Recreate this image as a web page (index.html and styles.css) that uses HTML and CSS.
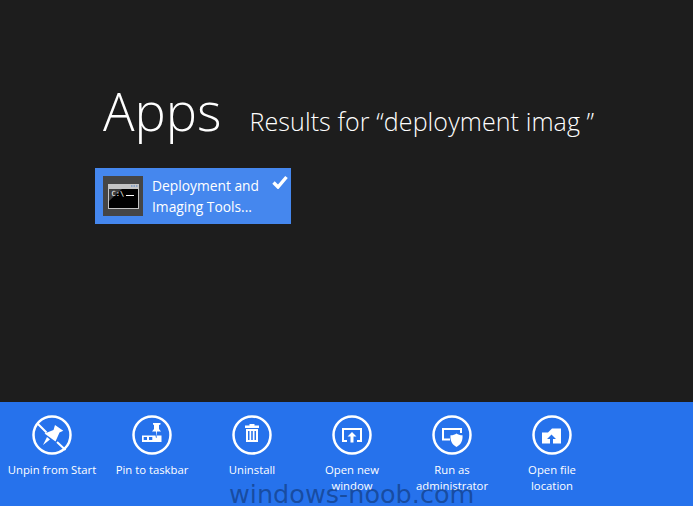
FILE: index.html
```html
<!DOCTYPE html>
<html lang="en">
<head>
  <meta charset="UTF-8" />
  <title>Apps</title>
  <link rel="stylesheet" href="styles.css">
</head>
<body>
  <main class="results">
    <div class="heading">
      <h1>Apps</h1>
      <h2>Results for “deployment imag ”</h2>
    </div>
    <div class="tile">
      <div class="tile-icon">
        <svg width="31" height="25" viewBox="0 0 31 25">
          <rect width="31" height="25" fill="#c4c4c4"/>
          <rect x="1" y="5" width="29" height="19" fill="#000"/>
          <path d="M1 17L14 5H1Z" fill="#3c3c3c"/>
          <path d="M23 1.500h1.500v1H23zM25.500 1.500h1.500v1h-1.500zM28 1.500h1.500v1H28z" fill="#4f7fc4"/>
          <text x="3.500" y="11.500" class="prompt">C:\</text>
          <rect x="18" y="11" width="8" height="1" fill="#fff"/>
        </svg>
      </div>
      <div class="tile-name">Deployment and Imaging Tools...</div>
      <svg class="tile-check" width="16" height="14" viewBox="0 0 16 14">
        <path d="M1.500 7.500L6 12L14.500 2" fill="none" stroke="#fff" stroke-width="3.400"/>
      </svg>
    </div>
  </main>

  <footer class="appbar">
    <div class="command">
      <svg class="ring" width="40" height="40" viewBox="0 0 40 40">
        <circle cx="20" cy="20" r="18.500"/>
        <path class="line" d="M5.500 8.500L14.500 17.500M25 27L33.500 35"/>
        <path class="solid" d="M23 10L31.300 15.700L27.500 17.500L23.500 26.500L12.500 18.500L21.500 15ZM15 22L18 24.500L11 30Z"/>
      </svg>
      <span>Unpin from Start</span>
    </div>
    <div class="command">
      <svg class="ring" width="40" height="40" viewBox="0 0 40 40">
        <circle cx="20" cy="20" r="18.500"/>
        <path class="solid" fill-rule="evenodd" d="M21 8h7.500v1.500l-1.500.5v4l2 2.500h-4l-.5 6-.5-6h-4l2-2.500v-4l-1-.5ZM10 20.500h13.500l.5 2.500h.5l.5-2.500h4.500v6.500H10ZM11.700 22v3h3.300v-3ZM17 22v3h3.300v-3Z"/>
      </svg>
      <span>Pin to taskbar</span>
    </div>
    <div class="command">
      <svg class="ring" width="40" height="40" viewBox="0 0 40 40">
        <circle cx="20" cy="20" r="18.500"/>
        <path class="solid" d="M17.500 9h5v1.500H27V13H13v-2.500h4.500ZM14 14h12v13H14ZM16 16v9h1.500v-9ZM19.200 16v9h1.600v-9ZM22.500 16v9H24v-9Z" fill-rule="evenodd"/>
      </svg>
      <span>Uninstall</span>
    </div>
    <div class="command">
      <svg class="ring" width="40" height="40" viewBox="0 0 40 40">
        <circle cx="20" cy="20" r="18.500"/>
        <path class="line" d="M15 26H11V14H29V26H25"/>
        <path class="solid" d="M20 17L24.500 21.500H21.500V27.500H18.500V21.500H15.500Z"/>
      </svg>
      <span>Open new<br>window</span>
    </div>
    <div class="command">
      <svg class="ring" width="40" height="40" viewBox="0 0 40 40">
        <circle cx="20" cy="20" r="18.500"/>
        <path class="line" d="M18 24.500H11V14H29V18"/>
        <path class="solid" d="M24.500 18.500C26 19.700 28 20.300 30.500 20.300C31 26 28.500 30 24.500 32C20.500 30 18 26 18.500 20.300C21 20.300 23 19.700 24.500 18.500Z"/>
      </svg>
      <span>Run as<br>administrator</span>
    </div>
    <div class="command">
      <svg class="ring" width="40" height="40" viewBox="0 0 40 40">
        <circle cx="20" cy="20" r="18.500"/>
        <path class="solid" fill-rule="evenodd" d="M10 17.500H16L20 13.500H29V28.500H10ZM19.500 19.500L15 24H18V28.500H21V24H24Z"/>
      </svg>
      <span>Open file<br>location</span>
    </div>
  </footer>

  <div class="watermark">windows-noob.com</div>
</body>
</html>
```

FILE: styles.css
```css
html, body {
  height: 100%;
}
body {
  margin: 0;
  position: relative;
  overflow: hidden;
  display: flex;
  flex-direction: column;
  background-color: #1d1d1d;
  color: #fff;
  font-family: "Open Sans", sans-serif;
}
.results {
  flex: 1;
  padding: 76px 0 0 95px;
}
.heading {
  display: flex;
  align-items: baseline;
  padding-left: 8px;
}
h1 {
  margin: 0;
  font-size: 52.500px;
  line-height: 70px;
  font-weight: 300;
}
h2 {
  margin: 0 0 0 28px;
  font-size: 25px;
  font-weight: 300;
  letter-spacing: 0.1px;
}
.tile {
  margin-top: 22px;
  position: relative;
  width: 196px;
  height: 56px;
  background-color: #4587ee;
  display: flex;
  align-items: center;
  box-sizing: border-box;
  padding-left: 8px;
}
.tile-icon {
  width: 40px;
  height: 40px;
  background-color: #454545;
  display: flex;
  align-items: center;
  justify-content: center;
  flex-shrink: 0;
}
.tile-name {
  margin-left: 9px;
  width: 125px;
  font-size: 13.800px;
  line-height: 21px;
}
.tile-check {
  position: absolute;
  top: 7px;
  right: 3px;
}
.prompt {
  font-family: "DejaVu Sans Mono", monospace;
  font-size: 7px;
  fill: #fff;
}
.appbar {
  height: 104px;
  background-color: #2672ec;
  display: flex;
  padding: 13px 0 0 2px;
  box-sizing: border-box;
}
.command {
  width: 100px;
  display: flex;
  flex-direction: column;
  align-items: center;
  font-size: 11.300px;
  line-height: 16px;
  text-align: center;
}
.command span {
  margin-top: 7px;
}
.ring circle {
  fill: none;
  stroke: #fff;
  stroke-width: 2.500;
}
.line {
  fill: none;
  stroke: #fff;
  stroke-width: 2;
}
.solid {
  fill: #fff;
}
.watermark {
  position: absolute;
  left: 229px;
  bottom: -5px;
  font-family: "DejaVu Sans", sans-serif;
  font-size: 25.500px;
  line-height: 34px;
  color: rgba(15, 50, 110, 0.6);
  white-space: nowrap;
}
```
